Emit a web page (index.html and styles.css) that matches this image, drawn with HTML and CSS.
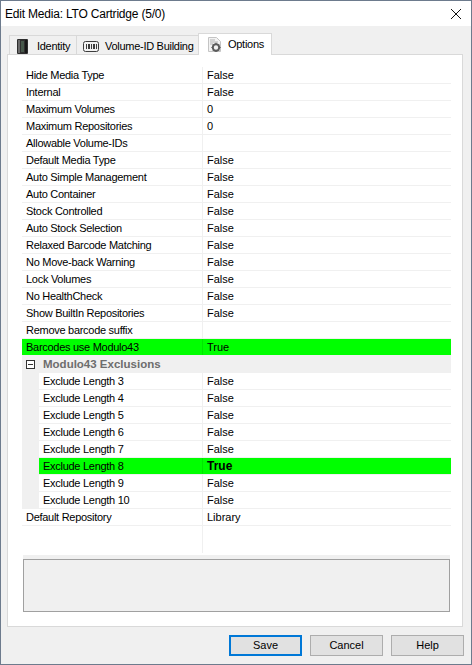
FILE: index.html
```html
<!DOCTYPE html>
<html>
<head>
<meta charset="utf-8">
<title>Edit Media</title>
<link rel="stylesheet" href="styles.css">
</head>
<body>
<div class="window">
  <div class="titlebar">
    <span class="title">Edit Media: LTO Cartridge (5/0)</span>
    <svg class="close" width="12" height="12" viewBox="0 0 12 12"><path d="M1 1L11 11M11 1L1 11" stroke="#111" stroke-width="1" fill="none"/></svg>
  </div>
  <div class="client">
    <div class="tabs">
      <div class="tab first">
        <svg width="11" height="15" viewBox="0 0 11 15"><rect x="0" y="0" width="11" height="15" rx="1" fill="#2e2e2e"/><rect x="1" y="1" width="2" height="13" fill="#6a6a6a"/><rect x="4" y="2" width="3" height="11" fill="#46574a"/><rect x="8" y="1" width="2" height="13" fill="#161616"/></svg>
        <span>Identity</span>
      </div>
      <div class="tab second">
        <svg width="16" height="11" viewBox="0 0 16 11"><rect x="0.5" y="0.5" width="15" height="10" rx="2" fill="#f2f2f2" stroke="#3c3c3c"/><path d="M3 3h1v5H3zM5 3h2v5H5zM8 3h1v5H8zM10 3h2v5h-2zM13 3h1v5h-1z" fill="#3c3c3c"/></svg>
        <span>Volume-ID Building</span>
      </div>
      <div class="tab active">
        <svg width="14" height="15" viewBox="0 0 14 15"><path d="M0.5 0.5h8l4 4v10h-12z" fill="#f2f2f2" stroke="#c4c4c4"/><path d="M2 3h5M2 5h8M2 7h3" stroke="#b5b5b5"/><circle cx="8" cy="10.5" r="3.2" fill="none" stroke="#5c5c5c" stroke-width="2"/><path d="M8 5.8v1.5M8 13.7v1.2M3.4 10.5h1.4M11.2 10.5h1.4M4.8 7.3l1 1M10.2 12.7l1 1M11.2 7.3l-1 1M4.8 13.7l1-1" stroke="#5c5c5c" stroke-width="1.2"/></svg>
        <span>Options</span>
      </div>
    </div>
    <div class="panel">
      <div class="grid">
        <div class="row"><div class="name">Hide Media Type</div><div class="val">False</div></div>
        <div class="row"><div class="name">Internal</div><div class="val">False</div></div>
        <div class="row"><div class="name">Maximum Volumes</div><div class="val">0</div></div>
        <div class="row"><div class="name">Maximum Repositories</div><div class="val">0</div></div>
        <div class="row"><div class="name">Allowable Volume-IDs</div><div class="val"></div></div>
        <div class="row"><div class="name">Default Media Type</div><div class="val">False</div></div>
        <div class="row"><div class="name">Auto Simple Management</div><div class="val">False</div></div>
        <div class="row"><div class="name">Auto Container</div><div class="val">False</div></div>
        <div class="row"><div class="name">Stock Controlled</div><div class="val">False</div></div>
        <div class="row"><div class="name">Auto Stock Selection</div><div class="val">False</div></div>
        <div class="row"><div class="name">Relaxed Barcode Matching</div><div class="val">False</div></div>
        <div class="row"><div class="name">No Move-back Warning</div><div class="val">False</div></div>
        <div class="row"><div class="name">Lock Volumes</div><div class="val">False</div></div>
        <div class="row"><div class="name">No HealthCheck</div><div class="val">False</div></div>
        <div class="row"><div class="name">Show BuiltIn Repositories</div><div class="val">False</div></div>
        <div class="row"><div class="name">Remove barcode suffix</div><div class="val"></div></div>
        <div class="row hl"><div class="name">Barcodes use Modulo43</div><div class="val">True</div></div>
        <div class="category"><span class="toggle"></span><span class="cat-label">Modulo43 Exclusions</span></div>
        <div class="row sub"><div class="name">Exclude Length 3</div><div class="val">False</div></div>
        <div class="row sub"><div class="name">Exclude Length 4</div><div class="val">False</div></div>
        <div class="row sub"><div class="name">Exclude Length 5</div><div class="val">False</div></div>
        <div class="row sub"><div class="name">Exclude Length 6</div><div class="val">False</div></div>
        <div class="row sub"><div class="name">Exclude Length 7</div><div class="val">False</div></div>
        <div class="row sub hl"><div class="name">Exclude Length 8</div><div class="val strong">True</div></div>
        <div class="row sub"><div class="name">Exclude Length 9</div><div class="val">False</div></div>
        <div class="row sub"><div class="name">Exclude Length 10</div><div class="val">False</div></div>
        <div class="row"><div class="name">Default Repository</div><div class="val">Library</div></div>
        <div class="filler"><div class="filler-name"></div></div>
      </div>
      <div class="help-strip"></div>
      <div class="help"></div>
    </div>
    <div class="buttons">
      <div class="btn default">Save</div>
      <div class="btn">Cancel</div>
      <div class="btn">Help</div>
    </div>
  </div>
</div>
</body>
</html>
```
FILE: styles.css
```css
* { box-sizing: border-box; }
html, body { margin: 0; padding: 0; }
body { width: 472px; height: 665px; overflow: hidden; background: #f0f0f0; font-family: "Liberation Sans", Arial, sans-serif; font-size: 11px; color: #000; }
.window { width: 472px; height: 665px; border: 1px solid #6d7b8d; display: flex; flex-direction: column; background: #f0f0f0; }
.titlebar { height: 25px; flex: none; background: #fff; display: flex; align-items: center; justify-content: space-between; padding: 0 9px 0 4px; }
.title { font-size: 12px; letter-spacing: -0.2px; }
.client { flex: 1; display: flex; flex-direction: column; padding: 7px 7px 0 6px; min-height: 0; }
.tabs { display: flex; height: 21px; flex: none; align-items: flex-start; padding-left: 2px; position: relative; z-index: 1; }
.tab { height: 19px; margin-top: 2px; display: flex; align-items: center; padding-top: 2px; background: #f0f0f0; border: 1px solid #d9d9d9; border-bottom: none; margin-right: -1px; white-space: nowrap; flex: none; letter-spacing: -0.28px; }
.tab.first { width: 68px; padding-left: 7px; gap: 9px; }
.tab.second { width: 123px; padding-left: 6px; gap: 6px; }
.tab.active { height: 22px; margin-top: 0; padding-top: 0; padding-bottom: 1px; width: 74px; background: #fff; padding-left: 9px; gap: 6px; }
.panel { width: 456px; height: 573px; flex: none; background: #fff; border: 1px solid #d9d9d9; padding: 12px 11px 0 14px; display: flex; flex-direction: column; }
.grid { flex: none; display: flex; flex-direction: column; }
.row { height: 17px; display: flex; border-bottom: 1px solid #f0f0f0; line-height: 16px; }
.name { width: 181px; flex: none; padding-left: 4px; border-right: 1px solid #f0f0f0; white-space: nowrap; letter-spacing: -0.28px; }
.val { flex: 1; padding-left: 4px; white-space: nowrap; }
.hl { background: #00ff00; }
.hl .name { border-right-color: #00e600; }
.strong { font-weight: bold; font-size: 12px; }
.sub { border-left: 17px solid #f0f0f0; }
.sub .name { width: 164px; }
.category { height: 17px; background: #f0f0f0; display: flex; align-items: center; font-weight: bold; font-size: 11.5px; color: #6d6d6d; padding-left: 4px; gap: 8px; }
.cat-label { padding-bottom: 2px; }
.toggle { width: 9px; height: 9px; border: 1px solid #333; background: linear-gradient(#333, #333) center / 5px 1px no-repeat #fff; flex: none; }
.filler { height: 27px; }
.filler-name { width: 181px; height: 100%; border-right: 1px solid #f0f0f0; }
.help-strip { height: 4px; flex: none; background: #f0f0f0; margin: 2px 1px 0 1px; }
.help { height: 53px; flex: none; background: #f0f0f0; border: 1px solid #a0a0a0; margin: 0 1px; }
.buttons { flex: 1; display: flex; justify-content: flex-end; gap: 8px; padding-top: 8px; align-items: flex-start; }
.btn { width: 73px; height: 21px; background: #e1e1e1; border: 1px solid #adadad; text-align: center; line-height: 19px; }
.btn.default { border: 2px solid #0078d7; line-height: 17px; }
```
